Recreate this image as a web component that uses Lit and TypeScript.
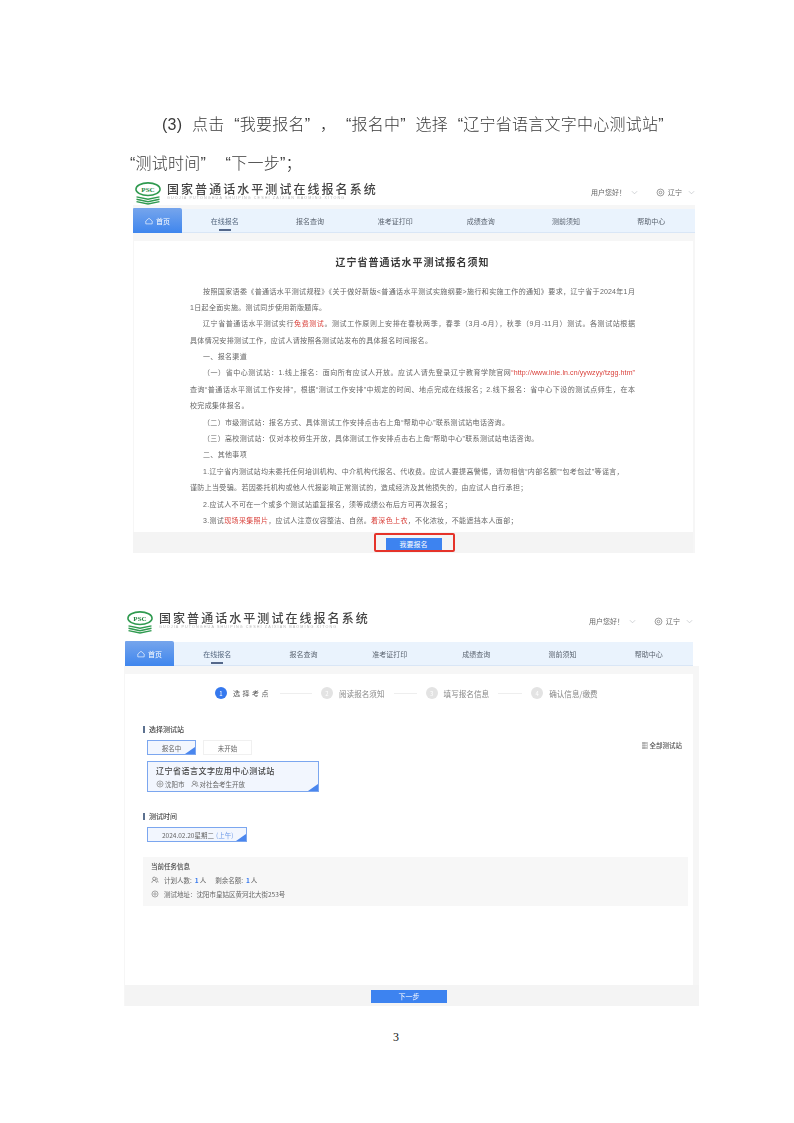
import { LitElement, html, css, svg } from "lit";
import { customElement, property } from "lit/decorators.js";

const logo = svg`<svg class="logo" viewBox="0 0 28 24" aria-hidden="true">
  <ellipse cx="14" cy="7.5" rx="12.6" ry="6.6" fill="#fff" stroke="#2f9a4f" stroke-width="1.6"/>
  <text x="14" y="10.2" text-anchor="middle" font-family="Liberation Serif, serif" font-weight="700" font-size="7.4" fill="#23863f">PSC</text>
  <path d="M2 15.5 14 18l12-2.5M2 18 14 20.5 26 18M2 20.5 14 23l12-2.5" fill="none" stroke="#2f9a4f" stroke-width="1.5"/>
</svg>`;
const chev = svg`<svg class="chev" viewBox="0 0 8 5" aria-hidden="true"><path d="M1 1l3 3 3-3" fill="none" stroke="#b5b8bd" stroke-width=".7"/></svg>`;
const pin = svg`<svg class="ico" viewBox="0 0 10 10" aria-hidden="true"><circle cx="5" cy="5" r="3.8" fill="none" stroke="#777" stroke-width=".8"/><circle cx="5" cy="5" r="1.5" fill="none" stroke="#777" stroke-width=".8"/></svg>`;
const people = svg`<svg class="ico" viewBox="0 0 10 10" aria-hidden="true"><circle cx="4" cy="3.4" r="2" fill="none" stroke="#666" stroke-width=".8"/><path d="M1 8.5c.4-2 1.6-3 3-3s2.600 1 3 3M6.800 2c1.200.4 1.400 2.200.2 3 1 .4 1.600 1.400 1.900 3" fill="none" stroke="#666" stroke-width=".8"/></svg>`;
const home = svg`<svg class="home-ico" viewBox="0 0 10 10" aria-hidden="true"><path d="M1 5 5 1.600 9 5v3.600H1z" fill="none" stroke="#fff" stroke-width=".8"/></svg>`;

const NAV = ["在线报名", "报名查询", "准考证打印", "成绩查询", "测前须知", "帮助中心"];

@customElement("site-head")
class SiteHead extends LitElement {
  @property({ type: Boolean }) second = false;
  static styles = css`
    :host { display: block; font-family: "Noto Sans CJK SC", "Liberation Sans", sans-serif; color: #555; }
    .top { display: flex; align-items: center; height: 24px; padding-left: 1px; background: #fff; }
    .logo { width: 28px; height: 23px; flex: none; }
    .brand { margin-left: 5px; padding-bottom: 3px; flex: 1; min-width: 0; }
    .cn { font-size: 12px; line-height: 14px; letter-spacing: 2.05px; color: #444; font-weight: 500; white-space: nowrap; }
    .en { font-family: "Liberation Sans", sans-serif; font-size: 3.7px; line-height: 5px; letter-spacing: 1.12px; color: #b8b8b8; white-space: nowrap; }
    .user { display: flex; align-items: center; font-size: 7px; color: #666; width: 104px; flex: none; padding-bottom: 2px; }
    .hello { width: 40px; }
    .chev { width: 7px; height: 5px; flex: none; }
    .ico { width: 9px; height: 9px; flex: none; margin: 0 3px 0 18px; }
    .prov { width: 20px; }
    .nav { display: flex; height: 24px; margin-top: 4px; background: #eaf3fd; border-bottom: 1px solid #d9e6f6; box-sizing: border-box; }
    .nav.wide { margin-top: 8px; }
    .homeTab { width: 49px; flex: none; margin-top: -1px; height: 25px; display: flex; align-items: center; justify-content: center; gap: 3px; background: linear-gradient(180deg, #76a5ec, #3f86ee); color: #fff; font-size: 7px; border-radius: 1px 2px 0 0; }
    .home-ico { width: 8px; height: 8px; }
    .items { flex: 1; display: grid; grid-template-columns: repeat(6, 1fr); padding: 0 1px 0 0; }
    .item { position: relative; display: flex; align-items: center; justify-content: center; font-size: 7px; color: #5b6470; white-space: nowrap; }
    .item.on { color: #55677f; }
    .item.on::after { content: ""; position: absolute; left: 50%; bottom: 1px; width: 12px; height: 2px; margin-left: -6px; background: #55688a; }
  `;
  render() {
    return html`
      <div class="top">
        ${logo}
        <div class="brand">
          <div class="cn">国家普通话水平测试在线报名系统</div>
          <div class="en">GUOJIA PUTONGHUA SHUIPING CESHI ZAIXIAN BAOMING XITONG</div>
        </div>
        <div class="user"><span class="hello">用户您好！</span>${chev}${pin}<span class="prov">辽宁</span>${chev}</div>
      </div>
      <div class="nav ${this.second ? "wide" : ""}">
        <div class="homeTab">${home}<span>首页</span></div>
        <div class="items">${NAV.map((n, i) => html`<div class="item ${i === 0 ? "on" : ""}">${n}</div>`)}</div>
      </div>`;
  }
}

type Seg = string | { r: string };
const NOTICE: { t: Seg[]; indent?: boolean; full?: boolean }[] = [
  { indent: true, full: true, t: ["按照国家语委《普通话水平测试规程》《关于做好新版<普通话水平测试实施纲要>施行和实施工作的通知》要求，辽宁省于2024年1月"] },
  { t: ["1日起全面实施。测试同步使用新版题库。"] },
  { indent: true, full: true, t: ["辽宁省普通话水平测试实行", { r: "免费测试" }, "。测试工作原则上安排在春秋两季，春季（3月-6月），秋季（9月-11月）测试。各测试站根据"] },
  { t: ["具体情况安排测试工作，应试人请按照各测试站发布的具体报名时间报名。"] },
  { indent: true, t: ["一、报名渠道"] },
  { indent: true, full: true, t: ["（一）省中心测试站：1.线上报名：面向所有应试人开放。应试人请先登录辽宁教育学院官网", { r: "“http://www.lnie.ln.cn/yywzyy/tzgg.htm”" }] },
  { full: true, t: ["查询“普通话水平测试工作安排”，根据“测试工作安排”中规定的时间、地点完成在线报名；2.线下报名：省中心下设的测试点师生，在本"] },
  { t: ["校完成集体报名。"] },
  { indent: true, t: ["（二）市级测试站：报名方式、具体测试工作安排点击右上角“帮助中心”联系测试站电话咨询。"] },
  { indent: true, t: ["（三）高校测试站：仅对本校师生开放，具体测试工作安排点击右上角“帮助中心”联系测试站电话咨询。"] },
  { indent: true, t: ["二、其他事项"] },
  { indent: true, t: ["1.辽宁省内测试站均未委托任何培训机构、中介机构代报名、代收费。应试人要提高警惕，请勿相信“内部名额”“包考包过”等谣言，"] },
  { t: ["谨防上当受骗。若因委托机构或他人代报影响正常测试的，造成经济及其他损失的，由应试人自行承担；"] },
  { indent: true, t: ["2.应试人不可在一个或多个测试站重复报名，须等成绩公布后方可再次报名；"] },
  { indent: true, t: ["3.测试", { r: "现场采集照片" }, "，应试人注意仪容整洁、自然。", { r: "着深色上衣" }, "，不化浓妆，不能遮挡本人面部；"] },
];

const STEPS = [
  { n: "1", t: "选择考点" },
  { n: "2", t: "阅读报名须知", rule: 32 },
  { n: "3", t: "填写报名信息", rule: 23 },
  { n: "4", t: "确认信息/缴费", rule: 24 },
];

@customElement("app-root")
class AppRoot extends LitElement {
  static styles = css`
    :host { display: block; width: 794px; height: 1123px; background: #fff; font-family: "Noto Sans CJK SC", "Liberation Sans", sans-serif; overflow: hidden; }
    .page { padding-top: 105px; }
    .p { font-family: "Liberation Sans", "Noto Sans CJK SC", sans-serif; font-size: 16px; line-height: 39px; height: 39px; color: #3a3a3a; font-weight: 300; white-space: pre; margin: 0; filter: blur(.3px); word-spacing: 5px; letter-spacing: .25px; }
    .p1 { padding-left: 162px; }
    .p2 { padding-left: 130px; height: 37px; }
    .shot { filter: blur(.35px); background: #f6f6f6; }
    .s1 { margin: 0 0 0 133px; width: 562px; height: 372px; }
    .s2 { margin: 55px 0 0 124px; width: 575px; height: 398px; }
    .s2 site-head { margin-left: 1px; margin-right: 6px; }
    .s2 .head { background: #fff; padding-top: 2px; }
    .card { background: #fff; color: #666; box-sizing: border-box; }
    .s1 .card { margin: 8px 2px 0 1px; height: 291px; padding: 14px 58px 0 56px; }
    .title { text-align: center; font-size: 10px; line-height: 14px; letter-spacing: 1px; font-weight: 700; color: #3a3a3a; margin: 0 0 14.5px; }
    .ln { font-family: "Liberation Sans", "Noto Sans CJK SC", sans-serif; font-size: 7px; line-height: 16.4px; height: 16.4px; white-space: nowrap; letter-spacing: .34px; color: #666; box-sizing: border-box; width: 445px; }
    .ln.in { padding-left: 13px; }
    .ln.full { white-space: normal; text-align: justify; text-align-last: justify; letter-spacing: .1px; }
    .red { color: #d9403a; }
    .foot { display: flex; justify-content: center; align-items: center; background: #f4f4f4; height: 21px; }
    .btn { background: #3d83f0; color: #fff; font-size: 7px; display: flex; align-items: center; justify-content: center; }
    .s1 .foot { margin-right: 2px; padding: 3px 0 0 1px; box-sizing: border-box; }
    .s1 .btn { width: 56px; height: 12px; }
    .mark { position: relative; }
    .mark::after { content: ""; position: absolute; inset: -5px -13px -2px -12px; border: 2px solid #e5332a; border-radius: 2px; }
    .s2 .card { margin: 8px 6px 0 1px; height: 311px; padding: 14px 0 0 18px; }
    .s2 .foot { margin: 0 0 0 1px; height: 21px; padding: 1px 6px 0 0; box-sizing: border-box; }
    .s2 .btn { width: 76px; height: 13px; }
    .steps { display: flex; align-items: center; padding-left: 72px; height: 10px; font-size: 7.6px; color: #888; }
    .step { display: flex; align-items: center; gap: 6px; white-space: nowrap; }
    .step.on { color: #555; font-size: 7px; letter-spacing: 2.5px; }
    .num { width: 12px; height: 12px; border-radius: 50%; background: #e3e3e3; color: #fff; font-size: 6px; display: flex; align-items: center; justify-content: center; letter-spacing: 0; }
    .step.on .num { background: #3578ee; }
    .rule { height: 1px; background: #eee; margin: 0 9px; }
    .rowhead { display: flex; align-items: flex-start; justify-content: space-between; }
    .h { display: flex; align-items: center; gap: 4px; font-size: 7px; line-height: 10px; font-weight: 500; color: #444; }
    .h::before { content: ""; width: 2px; height: 7px; background: #5c7190; }
    .all { font-size: 6.5px; line-height: 10px; color: #555; margin: 6px 11px 0 0; font-weight: 500; }
    .sec1 { margin-top: 26px; }
    .tabs { display: flex; gap: 7px; margin: 6px 0 6px 4px; }
    .tab, .chip, .st { position: relative; box-sizing: border-box; }
    .tab { width: 49px; height: 15px; border: 1px solid #f0f0f0; font-size: 6.5px; display: flex; align-items: center; justify-content: center; color: #666; }
    .tab.sel { border-color: #7ba6ef; }
    .sel { border: 1px solid #7ba6ef; background: #f2f6fe; }
    .sel::after { content: ""; position: absolute; right: 0; bottom: 0; width: 0; height: 0; border-style: solid; border-width: 0 0 7px 10px; border-color: transparent transparent #4a86ee transparent; }
    .st { margin-left: 4px; width: 172px; height: 31px; padding: 3px 0 0 8px; }
    .st b { display: block; font-size: 8px; line-height: 12px; font-weight: 500; color: #444; letter-spacing: .48px; }
    .meta { display: flex; align-items: center; font-size: 6.5px; line-height: 10px; margin-top: 2px; color: #666; }
    .meta .ico { width: 8px; height: 8px; margin-right: 1px; }
    .meta span { margin-right: 6px; }
    .sec2 { margin-top: 19px; }
    .chip { margin: 6px 0 0 4px; width: 100px; height: 15px; font-size: 6.5px; display: flex; align-items: center; padding-left: 14px; color: #666; white-space: nowrap; }
    .blue { color: #6f9be8; margin-left: 2px; }
    .panel { margin: 15px 0 0 0; width: 545px; height: 49px; background: #f7f7f7; padding: 4px 0 0 8px; box-sizing: border-box; font-size: 6.5px; color: #666; }
    .panel .pt { font-size: 6.5px; line-height: 10px; font-weight: 500; color: #444; }
    .pr { display: flex; align-items: center; line-height: 10px; margin-top: 4px; }
    .pr .ico { width: 8px; height: 8px; margin-right: 5px; }
    .num2 { color: #3578ee; font-weight: 700; margin: 0 1px 0 3px; }
    .gap { width: 9px; }
    .pageno { text-align: center; font-family: "Liberation Serif", serif; font-size: 12px; line-height: 14px; margin-top: 24px; color: #111; padding-right: 2px; }
  `;
  render() {
    return html`<div class="page">
      <p class="p p1">(3) 点击 “我要报名” ， “报名中” 选择 “辽宁省语言文字中心测试站”</p>
      <p class="p p2">“测试时间”  “下一步”；</p>

      <section class="shot s1">
        <site-head></site-head>
        <div class="card">
          <h2 class="title">辽宁省普通话水平测试报名须知</h2>
          ${NOTICE.map((l) => html`<div class="ln ${l.indent ? "in" : ""} ${l.full ? "full" : ""}">${l.t.map((s) => typeof s === "string" ? s : html`<span class="red">${s.r}</span>`)}</div>`)}
        </div>
        <div class="foot"><div class="btn mark">我要报名</div></div>
      </section>

      <section class="shot s2">
        <div class="head"><site-head second></site-head></div>
        <div class="card">
          <div class="steps">
            ${STEPS.map((s, i) => html`
              ${s.rule ? html`<div class="rule" style="width:${s.rule}px"></div>` : ""}
              <div class="step ${i === 0 ? "on" : ""}"><span class="num">${s.n}</span>${s.t}</div>`)}
          </div>
          <div class="rowhead sec1"><div class="h">选择测试站</div></div>
          <div class="rowhead">
            <div class="tabs"><div class="tab sel">报名中</div><div class="tab">未开始</div></div>
            <div class="all">▦ 全部测试站</div>
          </div>
          <div class="st sel">
            <b>辽宁省语言文字应用中心测试站</b>
            <div class="meta">${pin}<span>沈阳市</span>${people}<span>对社会考生开放</span></div>
          </div>
          <div class="h sec2">测试时间</div>
          <div class="chip sel">2024.02.20星期二<span class="blue">(上午)</span></div>
          <div class="panel">
            <div class="pt">当前任务信息</div>
            <div class="pr">${people}计划人数:<span class="num2">1</span>人<span class="gap"></span>剩余名额:<span class="num2">1</span>人</div>
            <div class="pr">${pin}测试地址：沈阳市皇姑区黄河北大街253号</div>
          </div>
        </div>
        <div class="foot"><div class="btn">下一步</div></div>
      </section>

      <div class="pageno">3</div>
    </div>`;
  }
}
